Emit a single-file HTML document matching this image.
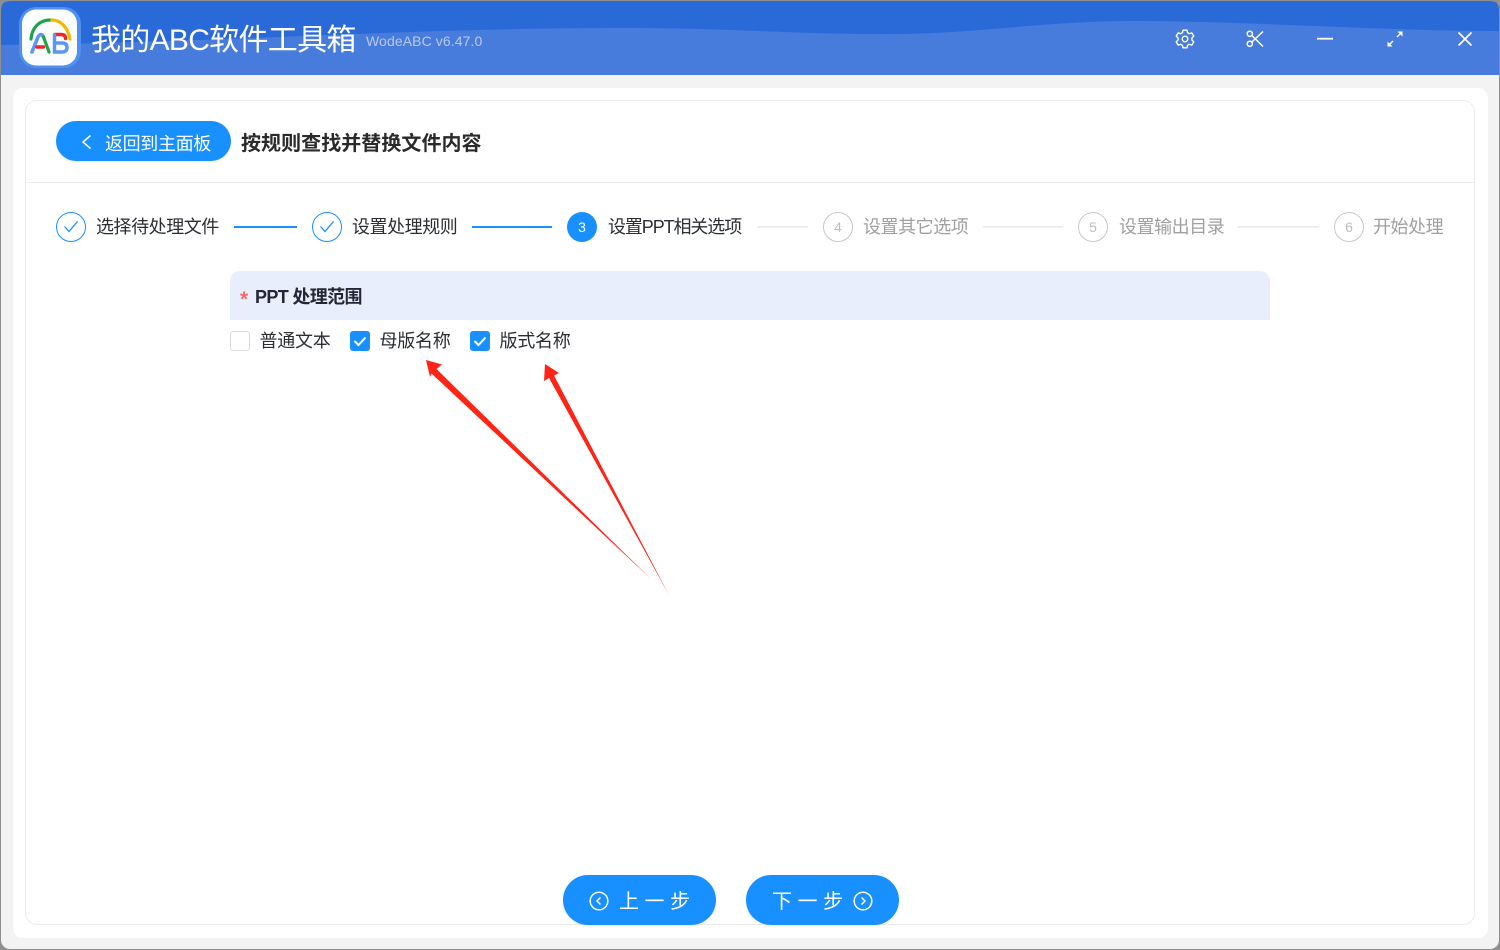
<!DOCTYPE html>
<html lang="zh">
<head>
<meta charset="utf-8">
<title>我的ABC软件工具箱</title>
<style>
html,body{margin:0;padding:0;width:1500px;height:950px;overflow:hidden;background:#8f8f8f;}
body{position:relative;font-family:"Liberation Sans","Noto Sans CJK SC",sans-serif;}
#win{position:absolute;left:1px;top:1px;width:1498px;height:948px;background:#f3f3f3;border-radius:9px;overflow:hidden;}
.a{position:absolute;white-space:nowrap;}
.s{position:absolute;white-space:nowrap;font-size:18px;line-height:24px;height:24px;top:215px;letter-spacing:-.45px;color:#2b2e33;}
.g{color:#a0a0a0;}
.c{position:absolute;box-sizing:border-box;width:30px;height:30px;top:212px;border-radius:50%;text-align:center;line-height:30px;font-size:14px;}
.cb{border:1px solid #1890ff;color:#1890ff;}
.cg{border:1px solid #c8c8c8;color:#bdbdbd;line-height:29px;}
.l{position:absolute;top:226px;height:2px;background:#1890ff;}
.lg{background:#eeeeee;}
.chk{position:absolute;box-sizing:border-box;top:331px;width:20px;height:20px;border-radius:3px;}
.on{background:#1890ff;}
.off{background:#fff;border:1px solid #dcdcdc;}
.t{position:absolute;white-space:nowrap;top:329px;font-size:18px;line-height:24px;letter-spacing:-.25px;color:#2b2e33;}
.btn{position:absolute;top:875px;width:153px;height:50px;border-radius:25px;background:#1890ff;box-shadow:0 1px 3px rgba(0,0,0,.08);}
svg{position:absolute;overflow:visible;}
</style>
</head>
<body>
<div id="win"></div>

<svg style="left:0;top:0" width="1500" height="950" viewBox="0 0 1500 950">
  <defs><clipPath id="hc"><path d="M1 75V10Q1 1 10 1H1490Q1499 1 1499 10V75Z"/></clipPath></defs>
  <g clip-path="url(#hc)">
    <rect x="0" y="0" width="1500" height="75" fill="#2a69d8"/>
    <path d="M0 45C100 44 200 40 330 35C450 30 540 28 620 28C740 28 800 35 900 34C980 33 1050 21 1130 21C1250 21 1380 31 1500 31V75H0Z" fill="#477cdc"/>
  </g>
</svg>

<!-- logo -->
<svg style="left:0;top:0" width="100" height="75" viewBox="0 0 100 75" fill="none" stroke-linecap="round">
  <rect x="19" y="7" width="62" height="61" rx="17" fill="#4f90f0"/>
  <rect x="22" y="9.500" width="55" height="56" rx="14" fill="#fcfdff"/>
  <path d="M31 39C32 27 40 20 50 20" stroke="#1fa34a" stroke-width="3.200"/>
  <path d="M52 20C61 20 68 28 70 39" stroke="#f5b800" stroke-width="3.200"/>
  <path d="M32 52L38 37Q41 32 43.500 37" stroke="#5a97f2" stroke-width="3.600"/>
  <path d="M43.500 37L49 52" stroke="#1fa34a" stroke-width="3.200"/>
  <path d="M37 47H43.500" stroke="#f0252b" stroke-width="3.400"/>
  <path d="M55 34.500H61Q65.500 34.500 65.500 38.500" stroke="#f0252b" stroke-width="3.400"/>
  <path d="M54.500 35V52H62Q67 52 67 47.500Q67 43 62 43H55" stroke="#5a97f2" stroke-width="3.400"/>
</svg>

<div class="a" style="left:91px;top:21px;font-size:30px;line-height:40px;color:#fff;letter-spacing:-.7px;">我的ABC软件工具箱</div>
<div class="a" style="left:366px;top:31px;font-size:14px;line-height:20px;color:#b8c9f0;letter-spacing:.1px;">WodeABC v6.47.0</div>

<!-- window icons -->
<svg style="left:1175px;top:29px" width="20" height="20" viewBox="0 0 20 20" fill="none" stroke="#fff" stroke-width="1.400" stroke-linejoin="round">
  <path d="M8 1.200H12L12.600 3.800L14.300 4.700L16.800 3.900L18.800 7.100L16.900 9V11L18.800 12.900L16.800 16.100L14.300 15.300L12.600 16.200L12 18.800H8L7.400 16.200L5.700 15.300L3.200 16.100L1.200 12.900L3.100 11V9L1.200 7.100L3.200 3.900L5.700 4.700L7.400 3.800Z"/>
  <circle cx="10" cy="10" r="2.800"/>
</svg>
<svg style="left:1246px;top:30px" width="18" height="18" viewBox="0 0 18 18" fill="none" stroke="#fff" stroke-width="1.500">
  <circle cx="3.800" cy="3.800" r="2.600"/>
  <circle cx="3.800" cy="13.800" r="2.600"/>
  <path d="M5.800 5.500L17 16.500M5.800 12.100L17 1.500"/>
</svg>
<svg style="left:1316px;top:30px" width="18" height="18" viewBox="0 0 18 18" fill="none" stroke="#fff" stroke-width="1.800">
  <path d="M1 8.700H17"/>
</svg>
<svg style="left:1387px;top:31px" width="16" height="16" viewBox="0 0 16 16" fill="#fff" stroke="#fff">
  <path d="M2 14L6 10" stroke-width="1.400"/>
  <path d="M10 6L14 2" stroke-width="1.400"/>
  <path d="M0.500 15.500V10.500L5.500 15.500Z" stroke="none"/>
  <path d="M15.500 0.500V5.500L10.500 0.500Z" stroke="none"/>
</svg>
<svg style="left:1457px;top:31px" width="16" height="16" viewBox="0 0 16 16" fill="none" stroke="#fff" stroke-width="1.600">
  <path d="M1.500 1.500L14.500 14.500M14.500 1.500L1.500 14.500"/>
</svg>

<!-- cards -->
<div class="a" style="left:13px;top:88px;width:1475px;height:850px;background:#fff;border-radius:10px;"></div>
<div class="a" style="left:25px;top:100px;width:1448px;height:823px;background:#fff;border:1px solid #ececec;border-radius:12px;"></div>
<div class="a" style="left:26px;top:182px;width:1448px;height:1px;background:#ececec;"></div>

<!-- back -->
<div class="a" style="left:56px;top:121px;width:175px;height:40px;border-radius:20px;background:#1890ff;box-shadow:0 1px 3px rgba(0,0,0,.08);"></div>
<svg style="left:81px;top:134px" width="11" height="16" viewBox="0 0 11 16" fill="none" stroke="#fff" stroke-width="1.500"><path d="M9.500 1.500L2 8L9.500 14.500"/></svg>
<div class="a" style="left:105px;top:132px;font-size:18px;line-height:24px;color:#fff;letter-spacing:-.35px;">返回到主面板</div>
<div class="a" style="left:241px;top:130px;font-size:20px;line-height:28px;font-weight:700;color:#2a2a2a;letter-spacing:.05px;">按规则查找并替换文件内容</div>

<!-- steps -->
<div class="c cb" style="left:56px;"></div>
<svg style="left:63px;top:220px" width="16" height="14" viewBox="0 0 16 14" fill="none" stroke="#1890ff" stroke-width="1.300"><path d="M1.500 6.500L6 11.500L14.500 1.500"/></svg>
<div class="s" style="left:96px;">选择待处理文件</div>
<div class="l" style="left:234px;width:63px;"></div>
<div class="c cb" style="left:312px;"></div>
<svg style="left:319px;top:220px" width="16" height="14" viewBox="0 0 16 14" fill="none" stroke="#1890ff" stroke-width="1.300"><path d="M1.500 6.500L6 11.500L14.500 1.500"/></svg>
<div class="s" style="left:352px;">设置处理规则</div>
<div class="l" style="left:472px;width:80px;"></div>
<div class="c" style="left:567px;background:#1890ff;color:#fff;">3</div>
<div class="s" style="left:608px;letter-spacing:-1.1px;">设置PPT相关选项</div>
<div class="l lg" style="left:757px;width:51px;"></div>
<div class="c cg" style="left:823px;">4</div>
<div class="s g" style="left:863px;">设置其它选项</div>
<div class="l lg" style="left:983px;width:80px;"></div>
<div class="c cg" style="left:1078px;">5</div>
<div class="s g" style="left:1119px;">设置输出目录</div>
<div class="l lg" style="left:1238px;width:81px;"></div>
<div class="c cg" style="left:1334px;">6</div>
<div class="s g" style="left:1373px;">开始处理</div>

<!-- section -->
<div class="a" style="left:230px;top:271px;width:1040px;height:49px;background:#e8eefb;border-radius:10px 10px 0 0;"></div>
<div class="a" style="left:240px;top:288px;font-size:21px;line-height:24px;color:#f56c6c;font-weight:700;">*</div>
<div class="a" style="left:255px;top:285px;font-size:18px;line-height:24px;font-weight:700;color:#222733;letter-spacing:-.65px;">PPT 处理范围</div>

<div class="chk off" style="left:230px;"></div>
<div class="t" style="left:259.500px;">普通文本</div>
<div class="chk on" style="left:350px;"></div>
<svg style="left:350px;top:331px" width="20" height="20" viewBox="0 0 20 20" fill="none" stroke="#fff" stroke-width="2"><path d="M4.500 10L8.500 14L15.500 6.500"/></svg>
<div class="t" style="left:379.500px;">母版名称</div>
<div class="chk on" style="left:470px;"></div>
<svg style="left:470px;top:331px" width="20" height="20" viewBox="0 0 20 20" fill="none" stroke="#fff" stroke-width="2"><path d="M4.500 10L8.500 14L15.500 6.500"/></svg>
<div class="t" style="left:499.500px;">版式名称</div>

<!-- arrows -->
<svg style="left:0;top:0" width="1500" height="950" viewBox="0 0 1500 950">
  <path d="M426 360L442 364.500L436.500 369L651 579L431.500 373.500L430 377Z" fill="#ff2416"/>
  <path d="M545 364L559 373L554 375.500L669 595L549 378L544 381Z" fill="#ff2416"/>
</svg>

<!-- footer buttons -->
<div class="btn" style="left:563px;"></div>
<svg style="left:589px;top:891px" width="20" height="20" viewBox="0 0 20 20" fill="none" stroke="#fff" stroke-width="1.500"><circle cx="10" cy="10" r="8.800"/><path d="M11.500 6.500L8 10L11.500 13.500"/></svg>
<div class="a" style="left:619px;top:888px;font-size:20px;line-height:28px;color:#fff;">上 一 步</div>
<div class="btn" style="left:746px;"></div>
<div class="a" style="left:772px;top:888px;font-size:20px;line-height:28px;color:#fff;">下 一 步</div>
<svg style="left:853px;top:891px" width="20" height="20" viewBox="0 0 20 20" fill="none" stroke="#fff" stroke-width="1.500"><circle cx="10" cy="10" r="8.800"/><path d="M8.500 6.500L12 10L8.500 13.500"/></svg>
</body>
</html>
